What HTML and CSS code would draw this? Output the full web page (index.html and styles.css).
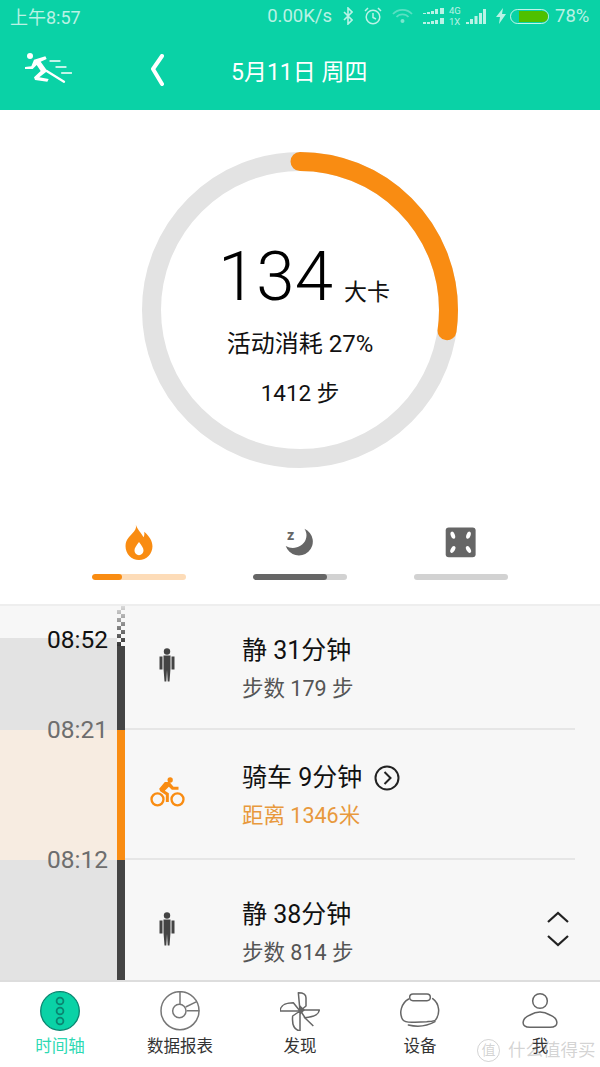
FILE: index.html
```html
<!DOCTYPE html>
<html lang="zh">
<head>
<meta charset="utf-8">
<title>时间轴</title>
<link rel="stylesheet" href="styles.css">
</head>
<body>
<div class="app">
  <header class="top">
    <div class="status">
      <span class="clock">上午8:57</span>
      <div class="status-right">
        <span class="speed">0.00K/s</span>
        <svg class="st bt" viewBox="0 0 10 18"><path d="M1 5l8 8-4 4V1l4 4-8 8" fill="none" stroke="currentColor" stroke-width="1.6"/></svg>
        <svg class="st alarm" viewBox="0 0 18 18"><circle cx="9" cy="10" r="6.8" fill="none" stroke="currentColor" stroke-width="1.5"/><path d="M9 6v4.5l3 1.5M1 4l3-3M17 4l-3-3" fill="none" stroke="currentColor" stroke-width="1.5"/></svg>
        <svg class="st wifi" viewBox="0 0 21 16"><path d="M1 6c5-5.500 14-5.500 19 0M4.500 9c3-3.500 9-3.500 12 0" fill="none" stroke="currentColor" stroke-width="1.800"/><circle cx="10.500" cy="13" r="2" fill="#fff"/></svg>
        <svg class="st dots" viewBox="0 0 21 16"><path d="M0 6h3V5H0zM4 6h3V4H4zM8 6h3V3H8zM12 6h3V1h-3zM17 6h4V0h-4zM0 16h3v-2H0zM4 16h3v-2H4zM8 16h3v-3H8zM12 16h3v-4h-3zM17 16h4v-6h-4z" fill="currentColor"/></svg>
        <span class="net"><span>4G</span><span>1X</span></span>
        <svg class="st bars" viewBox="0 0 20 15"><path d="M0 15v-2h3v2zM4 15v-5h3v5zM8.500 15V7h3v8zM13 15V4h3v11zM17 15V0h3v15z" fill="currentColor"/></svg>
        <svg class="st bolt" viewBox="0 0 10 16"><path d="M7 0L0 9h4l-1 7 7-10H6z" fill="currentColor"/></svg>
        <span class="battery"><span class="battery-fill"></span></span>
        <span class="pct">78%</span>
      </div>
    </div>
    <nav class="nav">
      <svg class="runner" viewBox="15 21 141 96">
        <circle cx="30" cy="33" r="9" fill="#fff"/>
        <path d="M42 44L76 34l4 8-18 8 20 28-24 19 28 5-4 8-37-5-3-8 20-19-12-18-12 12H15v-6l19-2z" fill="#fff"/>
        <path d="M80 78l52 32" stroke="#fff" stroke-width="7" stroke-linecap="round"/>
        <path d="M90 48h30M108 66h30M125 84h30" stroke="#fff" stroke-width="4" stroke-linecap="round"/>
      </svg>
      <svg class="back" viewBox="0 0 14 32"><path d="M12 2L3 15l9 15" fill="none" stroke="#fff" stroke-width="4" stroke-linecap="round" stroke-linejoin="round"/></svg>
      <span class="date">5月11日 周四</span>
    </nav>
  </header>

  <section class="summary">
    <div class="ring-wrap">
      <svg class="ring" viewBox="0 0 316 316">
        <circle cx="158" cy="158" r="148.500" fill="none" stroke="#e3e3e3" stroke-width="19"/>
        <circle cx="158" cy="158" r="148.500" fill="none" stroke="#f98c12" stroke-width="19" stroke-linecap="round" stroke-dasharray="254 933" transform="rotate(-90 158 158)"/>
      </svg>
      <div class="ring-text">
        <div class="cal"><span class="cal-num">134</span><span class="cal-unit">大卡</span></div>
        <div class="burn">活动消耗 27%</div>
        <div class="steps">1412 步</div>
      </div>
    </div>
    <div class="metrics">
      <div class="metric">
        <svg class="metric-icon" viewBox="160 45 94 110"><path d="M198 50c5 16 15 22 22 36 3-5 3-11 2-16 14 12 24 26 24 42 0 22-17 40-39 40s-39-18-39-40c0-18 12-28 20-37 8-8 12-15 10-25z" fill="#f98c12"/><path d="M207 100c8 11 13 17 13 24 0 8-6 14-13 14s-13-6-13-14c0-7 5-13 13-24z" fill="#fff"/></svg>
        <div class="bar bar-orange"><span class="bar-fill fill-orange" style="width:32%"></span></div>
      </div>
      <div class="metric">
        <svg class="metric-icon" viewBox="640 50 100 100"><path d="M703 61a41 41 0 1 1-55 51c22 13 52 2 59-20 4-11 2-22-4-31z" fill="#666"/><text x="652" y="95" class="zzz">z</text></svg>
        <div class="bar"><span class="bar-fill fill-gray" style="width:79%"></span></div>
      </div>
      <div class="metric">
        <svg class="metric-icon" viewBox="1125 50 100 100"><rect x="1130" y="57" width="88" height="88" rx="9" fill="#666"/><g fill="#fff"><ellipse cx="1151" cy="80" rx="6" ry="11" transform="rotate(-20 1151 80)"/><ellipse cx="1197" cy="80" rx="6" ry="11" transform="rotate(20 1197 80)"/><ellipse cx="1151" cy="122" rx="6" ry="11" transform="rotate(30 1151 122)"/><ellipse cx="1197" cy="122" rx="6" ry="11" transform="rotate(-30 1197 122)"/></g></svg>
        <div class="bar"></div>
      </div>
    </div>
  </section>

  <section class="timeline">
    <div class="row row-a">
      <div class="band band-first"><time class="tm tm-first">08:52</time><time class="tm tm-bottom">08:21</time></div>
      <div class="rail rail-first"></div>
      <div class="entry">
        <div class="entry-icon"><svg class="person" viewBox="0 0 16 34"><use href="#person"/></svg></div>
        <div class="entry-text"><div class="title">静 31分钟</div><div class="sub">步数 179 步</div></div>
      </div>
    </div>
    <div class="row row-b">
      <div class="band band-bike"><time class="tm tm-bottom">08:12</time></div>
      <div class="rail rail-bike"></div>
      <div class="entry">
        <div class="entry-icon"><svg class="bike" viewBox="25 20 110 96"><g fill="none" stroke="#f98c12" stroke-width="7"><circle cx="50" cy="90" r="18"/><circle cx="110" cy="90" r="18"/></g><circle cx="88" cy="32" r="8" fill="#f98c12"/><path d="M55 58L72 38h14l12 14h15v9H93l-9-9-12 12 12 8v26h-9V77L58 66z" fill="#f98c12"/></svg></div>
        <div class="entry-text"><div class="title">骑车 9分钟 <svg class="go" viewBox="0 0 26 26"><circle cx="13" cy="13" r="11.500" fill="none" stroke="#222" stroke-width="2"/><path d="M10.500 7l6 6-6 6" fill="none" stroke="#222" stroke-width="2"/></svg></div><div class="sub sub-orange">距离 1346米</div></div>
      </div>
    </div>
    <div class="row row-c">
      <div class="band"></div>
      <div class="rail"></div>
      <div class="entry entry-last">
        <div class="entry-icon"><svg class="person" viewBox="0 0 16 34"><use href="#person"/></svg></div>
        <div class="entry-text"><div class="title">静 38分钟</div><div class="sub">步数 814 步</div></div>
        <svg class="updown" viewBox="0 0 24 36"><path d="M2 11l10-9 10 9M2 25l10 9 10-9" fill="none" stroke="#222" stroke-width="2.200"/></svg>
      </div>
    </div>
  </section>

  <footer class="tabbar">
    <div class="tab tab-on">
      <svg class="tab-icon" viewBox="0 0 40 40"><circle cx="20" cy="20" r="19.300" fill="#0ad2a6" stroke="#0a8570" stroke-width="1.300"/><g fill="none" stroke="#0a8570" stroke-width="1.800"><circle cx="20" cy="10" r="3.400"/><circle cx="20" cy="20" r="3.400"/><circle cx="20" cy="30" r="3.400"/></g></svg>
      <span>时间轴</span>
    </div>
    <div class="tab">
      <svg class="tab-icon" viewBox="480 48 120 120"><g fill="none" stroke="#777" stroke-width="4.500"><circle cx="540" cy="107" r="57"/><circle cx="538" cy="108" r="20"/><path d="M540 88V50M557 96l33-16M560 107h38"/></g></svg>
      <span>数据报表</span>
    </div>
    <div class="tab">
      <svg class="tab-icon" viewBox="30 15 120 120"><g fill="none" stroke="#666" stroke-width="4.500" stroke-linejoin="round"><path d="M90 75H30c2-15 10-25 40-25z"/><path d="M90 75L85 20c14 0 23 5 23 15v25z"/><path d="M90 72h58c-2 12-10 20-43 23z"/><path d="M90 75v60c-16-3-25-15-22-45zM102 93l28 27"/></g><path d="M90 58l15 14-15 14z" fill="#666"/></svg>
      <span>发现</span>
    </div>
    <div class="tab">
      <svg class="tab-icon" viewBox="300 48 120 120"><g fill="none" stroke="#666" stroke-width="4.500" stroke-linecap="round"><rect x="329" y="57" width="62" height="20" rx="10"/><path d="M326 72c-22 12-30 42-18 62 6 10 22 8 37 8l35-2c12-1 25-1 27-6 14-18 12-48-9-63"/><path d="M325 150c25 6 55 4 80-10"/></g></svg>
      <span>设备</span>
    </div>
    <div class="tab">
      <svg class="tab-icon" viewBox="660 48 120 120"><g fill="none" stroke="#666" stroke-width="4.500"><circle cx="720" cy="78" r="22"/><path d="M690 157c-30 0-25-27 0-37 20-12 40-12 60 0 25 10 30 37 0 37z"/></g></svg>
      <span>我</span>
    </div>
    <div class="mark"><span class="mark-badge">值</span><span>什么值得买</span></div>
  </footer>
</div>
<svg class="defs" aria-hidden="true"><defs><g id="person" fill="#444"><circle cx="8" cy="3.500" r="3.200"/><path d="M4.500 7.500h7v13l-1 13H8.700L8 22l-.7 11.500H5.500l-1-13zM.5 8.500h3v13h-3zM12.500 8.500h3v13h-3z"/></g></defs></svg>
</body>
</html>
```
FILE: styles.css
```css
* { box-sizing: border-box; }
html, body { margin: 0; padding: 0; }
body { font-family: Roboto, "Noto Sans CJK SC", sans-serif; background: #fff; color: #111; }
.app { width: 600px; height: 1067px; display: flex; flex-direction: column; overflow: hidden; }
.defs { width: 0; height: 0; display: block; }

.top { height: 110px; background: #0ad2a6; color: #fff; flex: none; }
.status { height: 35px; display: flex; justify-content: space-between; align-items: center; padding: 0 10px 3px; font-size: 18px; color: rgba(255,255,255,.72); }
.status-right { display: flex; align-items: center; }
.st { display: block; flex: none; }
.speed { margin-right: 11px; font-size: 18.500px; }
.bt { width: 10px; height: 18px; margin-right: 11px; }
.alarm { width: 18px; height: 18px; margin-right: 10px; }
.wifi { width: 21px; height: 16px; margin-right: 10px; opacity: .45; }
.dots { width: 21px; height: 16px; margin-right: 5px; }
.net { display: flex; flex-direction: column; font-size: 9.500px; line-height: 11px; width: 13px; margin-right: 4px; }
.bars { width: 20px; height: 15px; margin-right: 10px; }
.bolt { width: 10px; height: 16px; margin-right: 4px; }
.battery { width: 39px; height: 15px; border: 1px solid rgba(255,255,255,.75); border-radius: 8px; padding: 1px; margin-right: 6px; display: block; }
.battery-fill { display: block; width: 29px; height: 11px; margin-left: 7px; background: #4fc000; border-radius: 0 6px 6px 0; }
.pct { width: 35px; font-size: 18.500px; }

.nav { height: 75px; display: flex; align-items: center; padding-left: 25px; }
.runner { width: 47px; height: 32px; flex: none; margin-top: -9px; }
.back { width: 14px; height: 32px; margin-left: 78px; margin-top: -6px; }
.date { font-size: 23px; margin-left: 67px; margin-top: -5px; }

.summary { height: 494px; flex: none; display: flex; flex-direction: column; align-items: center; padding-top: 42px; }
.ring-wrap { position: relative; width: 316px; height: 316px; }
.ring { display: block; width: 316px; height: 316px; }
.ring-text { position: absolute; inset: 0; display: flex; flex-direction: column; align-items: center; padding-top: 83px; color: #111; }
.cal { display: flex; align-items: baseline; height: 84px; margin-left: 8px; }
.cal-num { font-size: 69px; font-weight: 300; line-height: 84px; color: #000; }
.cal-unit { font-size: 23px; margin-left: 11px; }
.burn { font-size: 24px; line-height: 34px; margin-top: 8px; }
.steps { font-size: 22.500px; line-height: 32px; margin-top: 16px; }

.metrics { display: flex; gap: 67px; margin-top: 55px; }
.metric { width: 94px; display: flex; flex-direction: column; align-items: center; }
.metric-icon { width: 34px; height: 38px; display: block; }
.bar { width: 94px; height: 6px; background: #d2d2d2; border-radius: 3px; margin-top: 13px; overflow: hidden; }
.bar-orange { background: #fddcb8; }
.bar-fill { display: block; height: 100%; border-radius: 3px; }
.fill-orange { background: #f98c12; }
.fill-gray { background: #666; }
.zzz { font: 700 42px Roboto, sans-serif; fill: #666; }

.timeline { flex: 1; min-height: 0; overflow: hidden; background: #f7f7f7; border-top: 2px solid #eee; display: flex; flex-direction: column; }
.row { display: grid; grid-template-columns: 117px 8px 1fr; flex: none; }
.row-a { height: 124px; }
.row-b { height: 130px; }
.row-c { height: 142px; }
.band { position: relative; background: #e3e3e3; }
.band-first { background: linear-gradient(#f7f7f7 32px, #e3e3e3 32px); }
.band-bike { background: #f7ece1; }
.tm { position: absolute; right: 9px; font-size: 24.500px; line-height: 30px; color: #6e6e6e; }
.tm-first { top: 19px; color: #111; }
.tm-bottom { bottom: -15px; z-index: 1; }
.rail { background: #444; }
.rail-first { background: linear-gradient(#444,#444) 0 40px/100% 100% no-repeat, linear-gradient(rgba(247,247,247,.85), rgba(247,247,247,0) 40px), repeating-conic-gradient(#333 0 25%, #f7f7f7 0 50%) 0 0/8px 8px; }
.rail-bike { background: #f98c12; }
.entry { display: flex; align-items: center; margin-right: 25px; border-bottom: 2px solid #e6e6e6; }
.entry-last { border-bottom: 0; position: relative; }
.entry-icon { width: 117px; display: flex; justify-content: center; flex: none; padding: 0 33px 5px 0; }
.entry-text { padding-top: 2px; }
.person { width: 16px; height: 34px; display: block; }
.bike { width: 37px; height: 32px; display: block; }
.title { font-size: 25px; line-height: 36px; color: #111; display: flex; align-items: center; white-space: pre; }
.sub { font-size: 21.500px; line-height: 30px; color: #555; margin-top: 5px; }
.sub-orange { color: #e8993d; }
.go { width: 26px; height: 26px; margin-left: 6px; }
.updown { position: absolute; right: 5px; top: 51px; width: 24px; height: 36px; }

.tabbar { height: 87px; flex: none; border-top: 2px solid #ddd; background: #fff; display: grid; grid-template-columns: repeat(5, 1fr); position: relative; }
.tab { display: flex; flex-direction: column; align-items: center; padding-top: 9px; font-size: 16.500px; line-height: 22px; color: #333; }
.tab-on { color: #2dd9b3; }
.tab-icon { width: 40px; height: 40px; display: block; margin-bottom: 5px; }
.mark { position: absolute; left: 477px; top: 55px; display: flex; align-items: center; gap: 8px; font-size: 17.500px; line-height: 26px; color: rgba(150,150,150,.42); }
.mark-badge { width: 23px; height: 23px; border: 1.500px solid rgba(150,150,150,.42); border-radius: 50%; font-size: 14px; line-height: 20px; text-align: center; }
```
